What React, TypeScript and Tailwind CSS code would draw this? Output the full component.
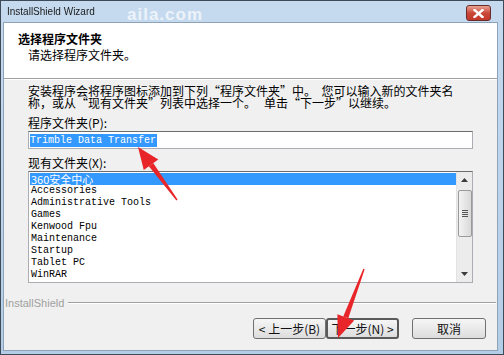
import React from "react";

const folders = [
  "360安全中心",
  "Accessories",
  "Administrative Tools",
  "Games",
  "Kenwood Fpu",
  "Maintenance",
  "Startup",
  "Tablet PC",
  "WinRAR",
];

const cjk = "font-['SimSun','Noto_Sans_CJK_SC',sans-serif]";
const mono = "font-['Liberation_Mono','Noto_Sans_CJK_SC',monospace]";

const Btn = ({ label, isDefault }: { label: string; isDefault?: boolean }) => (
  <div
    className={`h-[21px] flex items-center justify-center rounded-[3px] bg-gradient-to-b from-[#f6f6f6] to-[#dddddd] text-[12px] text-[#111] ${
      isDefault ? "border-2 border-[#5a5a5a]" : "border border-[#707070]"
    }`}
  >
    {label}
  </div>
);

const Arrow = ({ x1, y1, x2, y2 }: { x1: number; y1: number; x2: number; y2: number }) => {
  const ang = Math.atan2(y2 - y1, x2 - x1);
  const len = 22;
  const w = 9;
  const bx = x2 - Math.cos(ang) * len;
  const by = y2 - Math.sin(ang) * len;
  const px = -Math.sin(ang) * w;
  const py = Math.cos(ang) * w;
  return (
    <g>
      <polygon
        points={`${x1 - px * 0.08},${y1 - py * 0.08} ${x1 + px * 0.08},${y1 + py * 0.08} ${bx + px * 0.3},${by + py * 0.3} ${bx - px * 0.3},${by - py * 0.3}`}
        fill="#e8262a"
      />
      <polygon points={`${x2},${y2} ${bx + px},${by + py} ${bx - px},${by - py}`} fill="#e8262a" />
    </g>
  );
};

export default function App() {
  return (
    <div className={`relative w-[504px] h-[355px] overflow-hidden bg-gradient-to-b from-[#c6daef] to-[#b4cde6] border border-[#3d4a58] flex flex-col ${cjk}`}>
      {/* title bar */}
      <div className="h-[21px] flex items-center relative shrink-0">
        <span className="ml-[6px] text-[10px] text-[#1a1a1a] blur-[0.7px] font-['Liberation_Sans',sans-serif]">
          InstallShield Wizard
        </span>
        <span className="absolute left-[126px] top-[1px] text-[17px] font-bold text-white/70 font-['Liberation_Sans',sans-serif] tracking-[1px]">
          aila.com
        </span>
        <div className="absolute right-[12px] top-[4px] w-[25px] h-[16px] rounded-[3px] border border-[#6b2b2b] bg-gradient-to-b from-[#e8a393] via-[#c9473a] to-[#c2392c] flex items-center justify-center">
          <svg width="11" height="9" viewBox="0 0 11 9">
            <path d="M1.5 1 L9.5 8 M9.5 1 L1.5 8" stroke="#fff" strokeWidth="2.4" strokeLinecap="square" />
          </svg>
        </div>
      </div>

      {/* client */}
      <div className="flex-1 ml-[2px] mr-[5px] mb-[3px] bg-[#f0f0f0] border border-[#8ea3b8] flex flex-col">
        <div className="h-[56px] shrink-0 bg-white border-b border-[#a0a0a0] shadow-[0_1px_0_#ffffff] pl-[14px] pt-[9px]">
          <div className="text-[12px] font-bold leading-[13px] text-black">选择程序文件夹</div>
          <div className="text-[12px] leading-[13px] text-black pl-[10px] mt-[3px]">请选择程序文件夹。</div>
        </div>

        <div className="px-[24px] pt-[6px] text-[12px] text-black">
          <p className="leading-[12px] whitespace-nowrap">
            安装程序会将程序图标添加到下列“程序文件夹”中。 &nbsp;您可以输入新的文件夹名
            <br />
            称，或从“现有文件夹”列表中选择一个。 &nbsp;&nbsp;单击“下一步”以继续。
          </p>
          <div className="mt-[8px] leading-[12px]">程序文件夹(P):</div>
          <div className="mt-[2px] h-[18px] bg-white border border-[#abadb3] border-t-[#6d6d6d] flex items-center pl-[1px]">
            <span className={`${mono} text-[10px] leading-[13px] bg-[#3399ff] text-white pr-[1px]`}>
              Trimble Data Transfer
            </span>
          </div>
          <div className="mt-[8px] leading-[12px]">现有文件夹(X):</div>
          <div className="mt-[2px] h-[112px] bg-white border border-[#abadb3] border-t-[#6d6d6d] flex">
            <div className="flex-1 pt-[1px] pl-[1px]">
              {folders.map((f, i) => (
                <div
                  key={f}
                  className={`h-[12px] leading-[12px] pl-[1px] flex items-center ${mono} text-[10px] ${
                    i === 0 ? "bg-[#3399ff] text-white" : "text-black"
                  }`}
                >
                  {i === 0 ? <span className={`${cjk} text-[11px] leading-[12px]`}>{f}</span> : f}
                </div>
              ))}
            </div>
            <div className="w-[16px] bg-[#ececec] border-l border-[#e2e2e2] flex flex-col items-center">
              <div className="h-[16px] flex items-center justify-center">
                <svg width="7" height="4" viewBox="0 0 7 4">
                  <path d="M0 4 L3.5 0 L7 4 Z" fill="#3c3c3c" />
                </svg>
              </div>
              <div className="mt-[2px] w-[14px] h-[47px] rounded-[2px] border border-[#9a9a9a] bg-gradient-to-r from-[#f3f3f3] to-[#d9d9d9] flex flex-col items-center justify-center gap-[1px]">
                <div className="w-[6px] h-px bg-[#555]" />
                <div className="w-[6px] h-px bg-[#555]" />
                <div className="w-[6px] h-px bg-[#555]" />
                <div className="w-[6px] h-px bg-[#555]" />
              </div>
              <div className="flex-1" />
              <div className="h-[16px] flex items-center justify-center">
                <svg width="7" height="4" viewBox="0 0 7 4">
                  <path d="M0 0 L3.5 4 L7 0 Z" fill="#3c3c3c" />
                </svg>
              </div>
            </div>
          </div>
        </div>

        <div className="mt-[14px] h-[12px] flex items-center pl-[1px] pr-[1px] gap-[4px]">
          <span className="text-[11px] leading-[12px] text-[#a0a0a0] font-['Liberation_Sans',sans-serif]">InstallShield</span>
          <div className="flex-1 h-[2px] border-t border-[#a0a0a0] border-b border-b-white" />
        </div>

        <div className="mt-[9px] flex justify-end pr-[11px]">
          <div className="w-[73px]">
            <Btn label="< 上一步(B)" />
          </div>
          <div className="w-[73px]">
            <Btn label="下一步(N) >" isDefault />
          </div>
          <div className="w-[74px] ml-[13px]">
            <Btn label="取消" />
          </div>
        </div>
      </div>

      {/* annotation arrows */}
      <svg className="absolute left-0 top-0 pointer-events-none" width="504" height="355">
        <Arrow x1={176} y1={199} x2={137} y2={146} />
        <Arrow x1={363} y1={268} x2={337} y2={337} />
      </svg>
    </div>
  );
}
